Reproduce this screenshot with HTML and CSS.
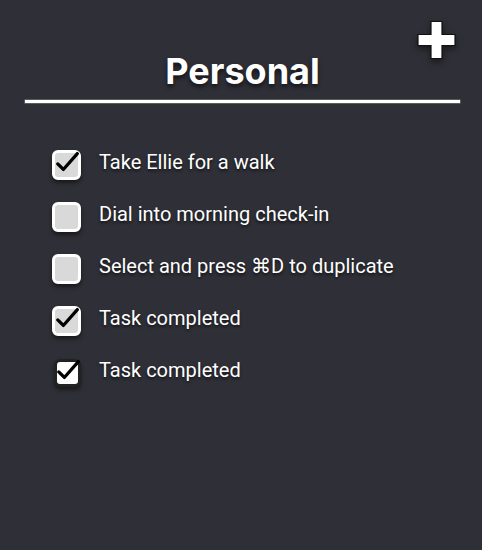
FILE: index.html
```html
<!DOCTYPE html>
<html>
<head>
<meta charset="utf-8">
<link rel="stylesheet" href="styles.css">
</head>
<body>
<div class="app">
  <header class="header">
    <span></span>
    <h1 class="title">Personal</h1>
    <button class="add" aria-label="Add">
      <svg width="40" height="40" viewBox="0 0 40 40">
        <path d="M15 1.5h11v13h13v11h-13v13h-11v-13h-13v-11h13z" fill="#fff" stroke="#111" stroke-width="1.2"/>
      </svg>
    </button>
  </header>
  <div class="rule"></div>
  <ul class="list">
    <li class="item"><span class="box checked"><svg viewBox="0 0 30 30"><path d="M4 17l6 6L25 6" /></svg></span><span class="label">Take Ellie for a walk</span></li>
    <li class="item"><span class="box"></span><span class="label">Dial into morning check-in</span></li>
    <li class="item"><span class="box"></span><span class="label">Select and press ⌘D to duplicate</span></li>
    <li class="item"><span class="box checked"><svg viewBox="0 0 30 30"><path d="M4 17l6 6L25 6" /></svg></span><span class="label">Task completed</span></li>
    <li class="item"><span class="box active"><svg viewBox="0 0 30 30"><path d="M4 17l6 6L25 6" /></svg></span><span class="label">Task completed</span></li>
  </ul>
</div>
</body>
</html>
```
FILE: styles.css
```css
html, body {
  margin: 0;
  padding: 0;
  background: #2f2f37;
  height: 100%;
}
body {
  font-family: Roboto, "Liberation Sans", sans-serif;
  color: #fff;
}
.header {
  display: grid;
  grid-template-columns: 1fr auto 1fr;
  align-items: start;
  padding: 20px 22px 0 25px;
  height: 78px;
  box-sizing: border-box;
}
.title {
  margin: 31px 0 0;
  font-family: Inter, Roboto, sans-serif;
  font-weight: 700;
  font-size: 36px;
  line-height: 40px;
  text-shadow: 0 3px 4px rgba(0,0,0,0.6);
}
.add {
  justify-self: end;
  margin: 0 4px 0 0;
  padding: 0;
  border: 0;
  background: none;
  width: 40px;
  height: 40px;
  filter: drop-shadow(0 3px 3px rgba(0,0,0,0.5));
}
.add svg { display: block; }
.rule {
  margin: 22px 22px 0 25px;
  height: 3px;
  background: #fff;
  box-shadow: 0 0 0 0.5px #888;
}
.list {
  list-style: none;
  margin: 0;
  padding: 33px 0 0 52px;
}
.item {
  display: flex;
  align-items: center;
  gap: 18px;
  height: 52px;
}
.box {
  width: 23px;
  height: 24px;
  margin-top: 5px;
  border: 3px solid #fff;
  border-radius: 6px;
  background: #d9d9d9;
  box-shadow: 0 3px 4px rgba(0,0,0,0.5);
  position: relative;
  flex: none;
}
.box svg {
  position: absolute;
  left: -1px;
  top: -5px;
  width: 28px;
  height: 28px;
  fill: none;
  stroke: #000;
  stroke-width: 3.5;
  stroke-linecap: round;
  stroke-linejoin: round;
}
.box.active {
  width: 21px;
  height: 22px;
  margin-left: 2px;
  background: #fff;
  border-color: #222;
}
.box.active svg {
  left: -2px;
  top: -6px;
}
.label {
  font-size: 20px;
  font-weight: 400;
  text-shadow: 0 2px 3px rgba(0,0,0,0.6);
}
```
